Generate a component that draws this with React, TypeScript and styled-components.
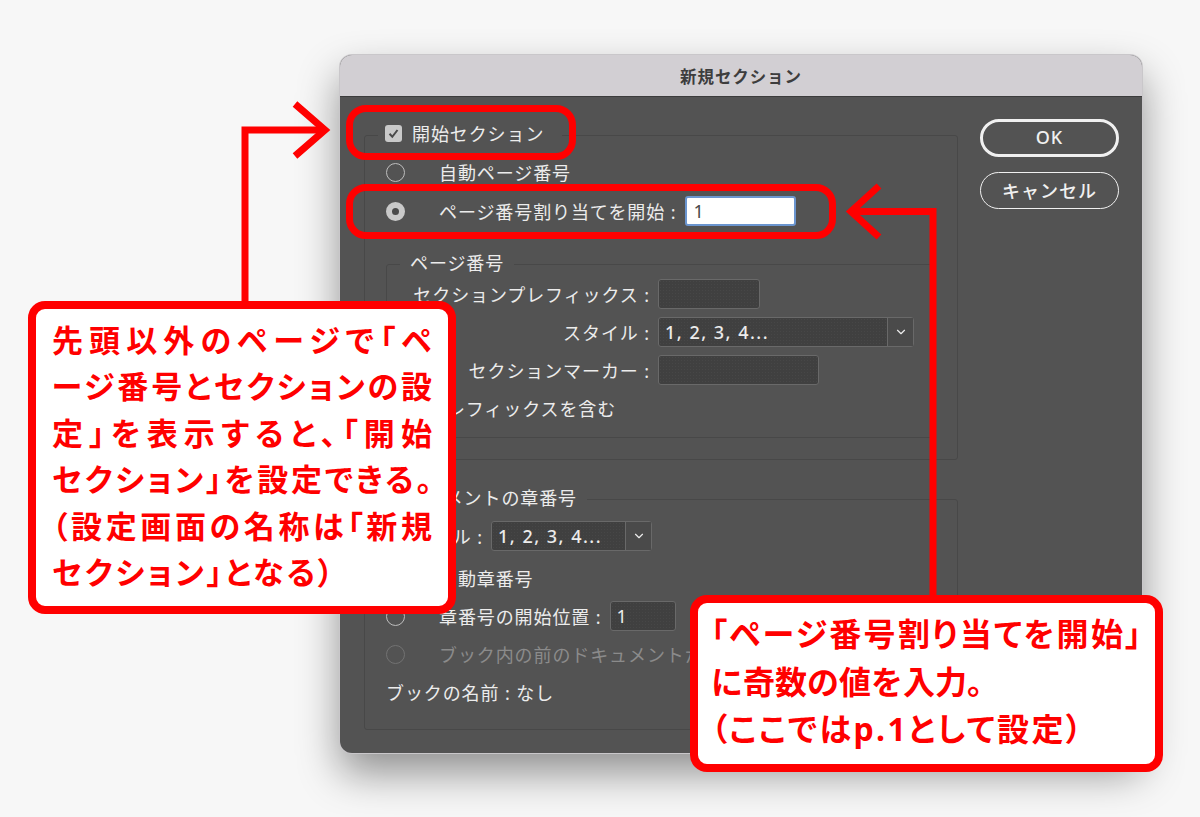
import React from "react";
import styled, { createGlobalStyle } from "styled-components";
import { ChevronDown } from "lucide-react";

const GlobalStyle = createGlobalStyle`
  html, body {
    margin: 0;
    padding: 0;
    background: #f7f7f7;
  }
`;

const Page = styled.div`
  position: relative;
  width: 1200px;
  height: 817px;
  padding: 55px 0 0 340px;
  box-sizing: border-box;
  overflow: hidden;
  background: #f7f7f7;
  font-family: "Noto Sans", "Noto Sans CJK JP", sans-serif;
`;

const Dialog = styled.section`
  width: 802px;
  height: 698px;
  display: flex;
  flex-direction: column;
  box-sizing: border-box;
  border-radius: 12px;
  overflow: hidden;
  background: #535353;
  box-shadow: 0 0 0 1px #c9c7ca, 0 20px 42px rgba(0, 0, 0, 0.42);
`;

const TitleBar = styled.header`
  flex: 0 0 42px;
  display: flex;
  align-items: center;
  justify-content: center;
  box-sizing: border-box;
  background: #d2cfd3;
  border-bottom: 1px solid #3c3c3c;
  color: #3d3d3d;
  font-size: 16.5px;
  font-weight: 700;
  letter-spacing: 0.9px;
`;

const DialogBody = styled.div`
  flex: 1;
  display: grid;
  grid-template-columns: 594px 139px;
  column-gap: 22px;
  padding: 0 0 0 24px;
  color: #ececec;
  font-size: 18px;
  letter-spacing: 0.9px;
`;

const Settings = styled.div`
  display: flex;
  flex-direction: column;
  gap: 27px;
  padding-top: 26px;
`;

const Group = styled.fieldset<{ $height: number }>`
  margin: 0;
  min-width: 0;
  height: ${(p) => p.$height}px;
  box-sizing: border-box;
  padding: 10px 21px 22px;
  border: 1px solid #484848;
  border-radius: 3px;
`;

const Legend = styled.legend<{ $inset: number }>`
  display: flex;
  align-items: center;
  gap: 10px;
  height: 24px;
  box-sizing: border-box;
  margin-left: -8px;
  padding: 0 ${(p) => (p.$inset === 7 ? 18 : 10)}px 4px ${(p) => p.$inset}px;
`;

const InnerGroup = styled.fieldset`
  margin: 26px 0 0;
  min-width: 0;
  box-sizing: border-box;
  padding: 3px 0 14px;
  border: 1px solid #484848;
  border-radius: 3px;
`;

const InnerLegend = styled.legend`
  height: 24px;
  line-height: 22px;
  margin-left: 13px;
  padding: 0 10px;
`;

const Stack = styled.div<{ $gap: number }>`
  display: flex;
  flex-direction: column;
  gap: ${(p) => p.$gap}px;
`;

const FormGrid = styled.div`
  display: grid;
  grid-template-columns: 263px 1fr;
  grid-auto-rows: 30px;
  column-gap: 8px;
  row-gap: 8px;
  align-items: center;
  justify-items: start;
`;

const FieldLabel = styled.label`
  justify-self: end;
  white-space: nowrap;
`;

const Row = styled.div<{ $muted?: boolean }>`
  display: flex;
  align-items: center;
  height: 30px;
  gap: 34px;
  white-space: nowrap;
  color: ${(p) => (p.$muted ? "#8b8b8b" : "inherit")};
`;

const InlineRow = styled.div<{ $span?: boolean }>`
  display: flex;
  align-items: center;
  height: 30px;
  gap: 8px;
  white-space: nowrap;
  ${(p) => (p.$span ? "grid-column: 1 / -1; padding-left: 13px; gap: 11px;" : "")}
`;

const StyleRow = styled(InlineRow)`
  margin-bottom: 4px;
`;

const ShortLabel = styled.label`
  width: 97px;
  text-align: right;
`;

const Radio = styled.span<{ $checked?: boolean; $disabled?: boolean }>`
  flex: 0 0 19px;
  width: 19px;
  height: 19px;
  box-sizing: border-box;
  border-radius: 50%;
  border: ${(p) => (p.$checked ? "6.5px solid #c9c9c9" : `1.5px solid ${p.$disabled ? "#727272" : "#bdbdbd"}`)};
  background: ${(p) => (p.$checked ? "#4a4a4a" : "transparent")};
`;

const CheckBox = styled.span`
  flex: 0 0 17px;
  width: 17px;
  height: 17px;
  display: flex;
  align-items: center;
  justify-content: center;
  border-radius: 3px;
  background: #c9c9c9;
`;

const TextField = styled.input<{ $width: number }>`
  width: ${(p) => p.$width}px;
  height: 30px;
  box-sizing: border-box;
  padding: 0 6px;
  border: 1.5px solid #696969;
  border-radius: 3px;
  background-color: #404040;
  background-image: radial-gradient(#474747 0.6px, transparent 0.7px);
  background-size: 3px 3px;
  color: #ececec;
  font: inherit;
  letter-spacing: inherit;
  outline: none;
`;

const FocusedField = styled(TextField)`
  margin-left: 1px;
  border: 2px solid #6b95cf;
  background: #ffffff;
  color: #4a4a4a;
`;

const Select = styled.div<{ $width: number }>`
  width: ${(p) => p.$width}px;
  height: 30px;
  display: flex;
  box-sizing: border-box;
  border: 1.5px solid #696969;
  border-radius: 3px;
  background-color: #404040;
  background-image: radial-gradient(#474747 0.6px, transparent 0.7px);
  background-size: 3px 3px;
`;

const SelectValue = styled.span`
  flex: 1;
  display: flex;
  align-items: center;
  padding-left: 6px;
  font-weight: 500;
  letter-spacing: 1.5px;
`;

const SelectArrow = styled.span`
  flex: 0 0 25px;
  display: flex;
  align-items: center;
  justify-content: center;
  border-left: 1.5px solid #696969;
  background: #4a4a4a;
  color: #ececec;
`;

const Actions = styled.div`
  display: flex;
  flex-direction: column;
  gap: 15px;
  padding-top: 22px;
`;

const Button = styled.button<{ $primary?: boolean }>`
  height: ${(p) => (p.$primary ? 38 : 37)}px;
  box-sizing: border-box;
  padding: 0 0 2px;
  border: ${(p) => (p.$primary ? "3px" : "1.5px")} solid #f0f0f0;
  border-radius: 19px;
  background: transparent;
  color: #f0f0f0;
  font: inherit;
  font-weight: 500;
  letter-spacing: 1px;
`;

const Highlight = styled.div<{ $left: number; $top: number; $width: number; $height: number }>`
  position: absolute;
  left: ${(p) => p.$left}px;
  top: ${(p) => p.$top}px;
  width: ${(p) => p.$width}px;
  height: ${(p) => p.$height}px;
  box-sizing: border-box;
  border: 7px solid #ff0000;
  border-radius: 20px;
`;

const ArrowLayer = styled.svg`
  position: absolute;
  left: 0;
  top: 0;
  pointer-events: none;
`;

const Callout = styled.div`
  position: absolute;
  box-sizing: border-box;
  border: 8px solid #ff0000;
  border-radius: 17px;
  background: #ffffff;
  color: #ff0000;
  font-weight: 700;
  font-size: 31px;
`;

const LeftCallout = styled(Callout)`
  left: 28px;
  top: 301px;
  width: 428px;
  height: 313px;
  padding: 8px 16px 0;
  line-height: 46.4px;
`;

const RightCallout = styled(Callout)`
  left: 690px;
  top: 595px;
  width: 473px;
  height: 177px;
  padding: 7px 12px 0 13px;
  font-size: 32px;
  line-height: 47.5px;
`;

const CalloutLine = styled.div<{ $fill?: boolean; $tight?: boolean; $spread?: number }>`
  white-space: nowrap;
  font-feature-settings: ${(p) => (p.$tight ? '"palt"' : "normal")};
  letter-spacing: ${(p) => p.$spread ?? 0}px;
  text-align: ${(p) => (p.$fill ? "justify" : "left")};
  text-align-last: ${(p) => (p.$fill ? "justify" : "left")};
  text-justify: inter-character;
`;

const Check = () => (
  <svg width="13" height="13" viewBox="0 0 13 13" fill="none">
    <path d="M2.5 6.8 5.3 9.8 10.5 3" stroke="#4a4a4a" strokeWidth="2" />
  </svg>
);

export default function App() {
  return (
    <Page lang="ja">
      <GlobalStyle />
      <Dialog>
        <TitleBar>新規セクション</TitleBar>
        <DialogBody>
          <Settings>
            <Group $height={337}>
              <Legend $inset={7}>
                <CheckBox>
                  <Check />
                </CheckBox>
                開始セクション
              </Legend>
              <Stack $gap={9}>
                <Row>
                  <Radio />
                  自動ページ番号
                </Row>
                <Row>
                  <Radio $checked />
                  <InlineRow>
                    ページ番号割り当てを開始 :
                    <FocusedField $width={111} defaultValue="1" readOnly />
                  </InlineRow>
                </Row>
              </Stack>
              <InnerGroup>
                <InnerLegend>ページ番号</InnerLegend>
                <FormGrid>
                  <FieldLabel>セクションプレフィックス :</FieldLabel>
                  <TextField $width={102} readOnly />
                  <FieldLabel>スタイル :</FieldLabel>
                  <Select $width={256}>
                    <SelectValue>1, 2, 3, 4...</SelectValue>
                    <SelectArrow>
                      <ChevronDown size={14} strokeWidth={2} />
                    </SelectArrow>
                  </Select>
                  <FieldLabel>セクションマーカー :</FieldLabel>
                  <TextField $width={161} readOnly />
                  <InlineRow $span>
                    <CheckBox />
                    プレフィックスを含む
                  </InlineRow>
                </FormGrid>
              </InnerGroup>
            </Group>
            <Group $height={243}>
              <Legend $inset={10}>ドキュメントの章番号</Legend>
              <Stack $gap={8}>
                <StyleRow>
                  <ShortLabel>スタイル :</ShortLabel>
                  <Select $width={161}>
                    <SelectValue>1, 2, 3, 4...</SelectValue>
                    <SelectArrow>
                      <ChevronDown size={14} strokeWidth={2} />
                    </SelectArrow>
                  </Select>
                </StyleRow>
                <Row>
                  <Radio $checked />
                  自動章番号
                </Row>
                <Row>
                  <Radio />
                  <InlineRow>
                    章番号の開始位置 :
                    <TextField $width={66} defaultValue="1" readOnly />
                  </InlineRow>
                </Row>
                <Row $muted>
                  <Radio $disabled />
                  ブック内の前のドキュメントから継続
                </Row>
                <Row>ブックの名前 : なし</Row>
              </Stack>
            </Group>
          </Settings>
          <Actions>
            <Button $primary>OK</Button>
            <Button>キャンセル</Button>
          </Actions>
        </DialogBody>
      </Dialog>

      <Highlight $left={346} $top={105} $width={230} $height={55} />
      <Highlight $left={346} $top={184} $width={490} $height={55} />

      <ArrowLayer width="1200" height="817" viewBox="0 0 1200 817" fill="none">
        <path d="M245 302V130H324" stroke="#ff0000" strokeWidth="7" />
        <path d="M295 104 325 130 295 156" stroke="#ff0000" strokeWidth="7" />
        <path d="M933 600V211.5H852" stroke="#ff0000" strokeWidth="7" />
        <path d="M879 186 851 211.5 879 237" stroke="#ff0000" strokeWidth="7" />
      </ArrowLayer>

      <LeftCallout>
        <CalloutLine $fill $tight>先頭以外のページで「ペ</CalloutLine>
        <CalloutLine $fill $tight>ージ番号とセクションの設</CalloutLine>
        <CalloutLine $fill $tight>定」を表示すると、「開始</CalloutLine>
        <CalloutLine $fill $tight>セクション」を設定できる。</CalloutLine>
        <CalloutLine $fill $tight>（設定画面の名称は「新規</CalloutLine>
        <CalloutLine $tight $spread={3}>セクション」となる）</CalloutLine>
      </LeftCallout>

      <RightCallout>
        <CalloutLine $tight $spread={2.3}>「ページ番号割り当てを開始」</CalloutLine>
        <CalloutLine>に奇数の値を入力。</CalloutLine>
        <CalloutLine $tight $spread={2.4}>（ここではp.1として設定）</CalloutLine>
      </RightCallout>
    </Page>
  );
}
